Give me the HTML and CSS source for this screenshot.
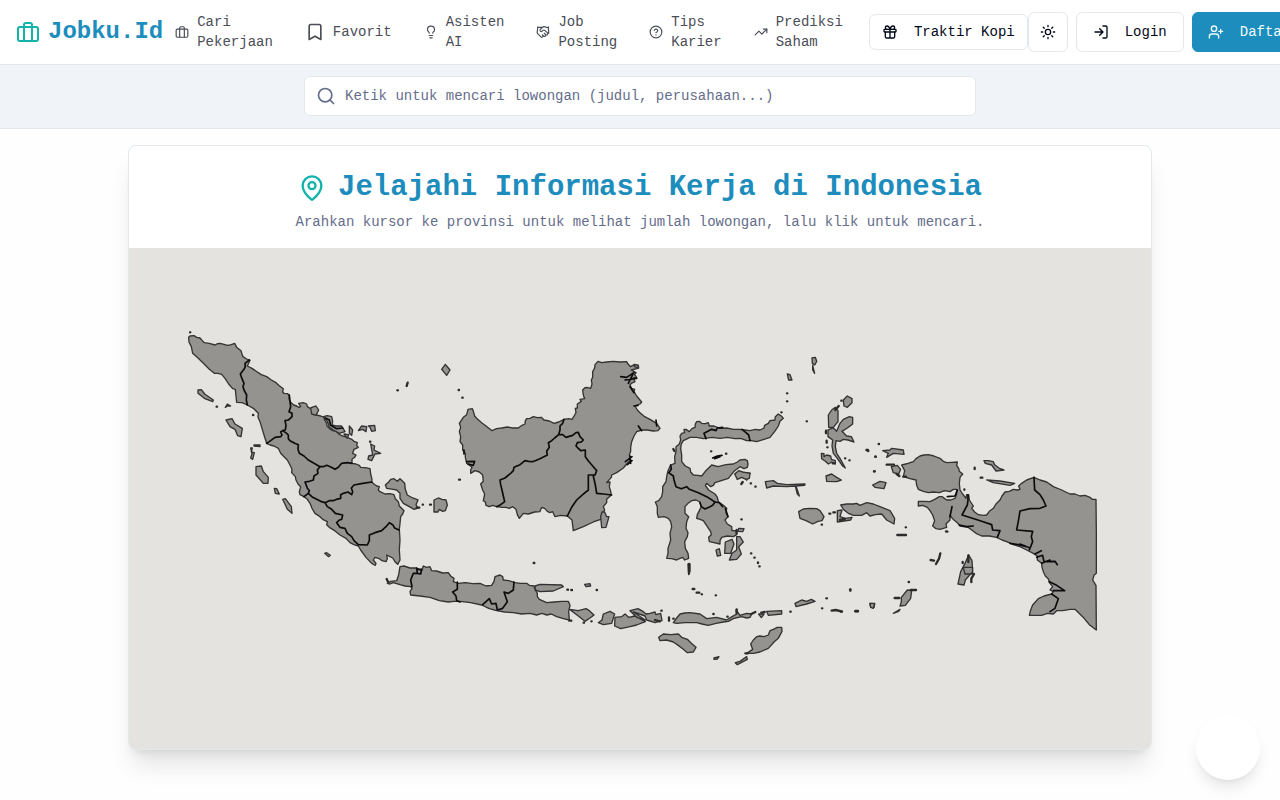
FILE: index.html
```html
<!DOCTYPE html>
<html lang="id">
<head>
<meta charset="utf-8">
<meta name="viewport" content="width=device-width, initial-scale=1">
<title>Jobku.Id</title>
<link rel="stylesheet" href="styles.css">
</head>
<body>
<header class="topbar">
  <a class="brand" href="#">
    <svg class="icon icon-brand" viewBox="0 0 24 24"><path d="M8 21V5a2 2 0 0 1 2-2h4a2 2 0 0 1 2 2v16"/><rect x="2" y="7" width="20" height="14" rx="2"/></svg>
    <span>Jobku.Id</span>
  </a>
  <nav class="nav">
    <a class="nav-link" href="#"><svg class="icon icon-sm" viewBox="0 0 24 24"><path d="M8 21V5a2 2 0 0 1 2-2h4a2 2 0 0 1 2 2v16"/><rect x="2" y="7" width="20" height="14" rx="2"/></svg><span class="nav-text">Cari Pekerjaan</span></a>
    <a class="nav-link" href="#"><svg class="icon icon-md" viewBox="0 0 24 24"><path d="m19 21-7-4-7 4V5a2 2 0 0 1 2-2h10a2 2 0 0 1 2 2z"/></svg><span class="nav-text">Favorit</span></a>
    <a class="nav-link" href="#"><svg class="icon icon-sm" viewBox="0 0 24 24"><path d="M15 14c.2-1 .7-1.700 1.500-2.500 1-.9 1.500-2.200 1.500-3.500A6 6 0 0 0 6 8c0 1 .2 2.200 1.500 3.500.7.7 1.300 1.500 1.500 2.500M9 18h6M10 22h4"/></svg><span class="nav-text">Asisten AI</span></a>
    <a class="nav-link" href="#"><svg class="icon icon-sm" viewBox="0 0 24 24"><path d="m11 17 2 2a1 1 0 1 0 3-3"/><path d="m14 14 2.500 2.500a1 1 0 1 0 3-3l-3.880-3.880a3 3 0 0 0-4.240 0l-.88.88a1 1 0 1 1-3-3l2.810-2.810a5.790 5.790 0 0 1 7.060-.87l.47.28a2 2 0 0 0 1.420.25L21 4"/><path d="m21 3 1 11h-2M3 3 2 14l6.500 6.500a1 1 0 1 0 3-3M3 4h8"/></svg><span class="nav-text">Job Posting</span></a>
    <a class="nav-link" href="#"><svg class="icon icon-sm" viewBox="0 0 24 24"><circle cx="12" cy="12" r="10"/><path d="M9.090 9a3 3 0 0 1 5.830 1c0 2-3 3-3 3M12 17h.01"/></svg><span class="nav-text">Tips Karier</span></a>
    <a class="nav-link" href="#"><svg class="icon icon-sm" viewBox="0 0 24 24"><path d="m22 7-8.500 8.500-5-5L2 17"/><path d="M16 7h6v6"/></svg><span class="nav-text">Prediksi Saham</span></a>
  </nav>
  <div class="actions">
    <button class="btn btn-compact" type="button"><svg class="icon icon-btn" viewBox="0 0 24 24"><rect x="3" y="8" width="18" height="4" rx="1"/><path d="M12 8v13M19 12v7a2 2 0 0 1-2 2H7a2 2 0 0 1-2-2v-7M7.500 8a2.500 2.500 0 0 1 0-5A4.800 8 0 0 1 12 8a4.800 8 0 0 1 4.500-5 2.500 2.500 0 0 1 0 5"/></svg>Traktir Kopi</button>
    <button class="btn btn-square" type="button" aria-label="Ganti tema"><svg class="icon icon-btn" viewBox="0 0 24 24"><circle cx="12" cy="12" r="4"/><path d="M12 2v2M12 20v2M4.930 4.930l1.410 1.410M17.660 17.660l1.410 1.410M2 12h2M20 12h2M6.340 17.660l-1.410 1.410M19.070 4.930l-1.410 1.410"/></svg></button>
    <button class="btn btn-spaced" type="button"><svg class="icon icon-btn" viewBox="0 0 24 24"><path d="M15 3h4a2 2 0 0 1 2 2v14a2 2 0 0 1-2 2h-4M10 17l5-5-5-5M15 12H3"/></svg>Login</button>
    <button class="btn btn-spaced btn-primary" type="button"><svg class="icon icon-btn" viewBox="0 0 24 24"><path d="M16 21v-2a4 4 0 0 0-4-4H6a4 4 0 0 0-4 4v2"/><circle cx="9" cy="7" r="4"/><path d="M19 8v6M22 11h-6"/></svg>Daftar</button>
  </div>
</header>

<form class="searchbar" role="search">
  <label class="search">
    <svg class="icon icon-md" viewBox="0 0 24 24"><circle cx="11" cy="11" r="8"/><path d="m21 21-4.300-4.300"/></svg>
    <input class="search-input" type="search" aria-label="Cari lowongan" placeholder="Ketik untuk mencari lowongan (judul, perusahaan...)">
  </label>
</form>

<main class="content">
  <section class="card">
    <div class="card-head">
      <h1 class="title"><svg class="icon icon-title" viewBox="0 0 24 24"><path d="M20 10c0 5-5.500 10.200-7.400 11.800a1 1 0 0 1-1.200 0C9.500 20.200 4 15 4 10a8 8 0 0 1 16 0"/><circle cx="12" cy="10" r="3"/></svg>Jelajahi Informasi Kerja di Indonesia</h1>
      <p class="subtitle">Arahkan kursor ke provinsi untuk melihat jumlah lowongan, lalu klik untuk mencari.</p>
    </div>
    <svg class="map" viewBox="129 248 1022 501" role="img" aria-label="Peta provinsi Indonesia">
      <!-- Sumatra -->
      <g transform="translate(170 320) scale(.33333)">
        <path class="land" d="M56 52L60 48 72 47 80 52 90 54 97 62 103 68 118 70 135 75 143 71 150 70 162 73 172 76 184 74 194 70 200 82 213 92 216 102 219 110 230 117 240 121 236 130 232 138 246 145 262 156 274 164 290 170 304 180 318 188 328 197 340 206 338 216 342 220 352 221 358 225 357 236 362 247 371 255 380 258 386 262 392 260 386 250 400 248 410 252 412 260 425 268 436 275 440 285 452 288 462 292 464 300 470 310 471 318 478 325 488 332 500 335 510 345 518 348 530 351 545 358 552 364 562 368 560 376 565 382 552 388 548 400 558 405 554 412 546 418 546 430 558 432 568 436 572 442 586 443 600 446 602 462 606 478 605 486 612 492 620 498 628 500 625 510 630 515 645 522 660 521 672 524 676 536 685 545 688 558 702 572 698 582 692 590 690 610 688 628 690 660 688 690 690 720 683 733 675 725 668 714 660 710 650 705 652 716 648 725 636 722 628 716 615 712 610 720 618 730 616 736 608 732 600 725 588 712 572 690 565 678 552 674 540 668 528 655 510 645 494 632 478 622 470 614 472 605 458 598 450 590 435 580 426 565 420 550 412 538 402 530 390 524 388 516 392 500 384 492 378 480 376 470 365 458 366 448 360 435 352 420 342 410 332 400 325 385 312 378 300 375 290 370 286 358 282 345 276 325 270 305 264 292 265 280 250 265 232 255 216 248 200 247 198 228 196 208 188 206 176 192 165 175 155 163 144 160 133 160 118 148 100 130 84 114 68 100 64 80 57 66Z"/>
        <path class="border" d="M238 120L225 130 226 140 222 148 211 162 216 176 222 190 219 200 222 210 230 225 229 240 232 255M358 225L360 244 362 260 357 275 366 280 366 290 360 296 355 300 345 302 348 316 346 330 338 332 332 336 336 345 332 350 315 352 302 362 290 370M338 332L350 340 355 345 355 356 360 362 374 370 385 374 384 388 388 400 402 408 415 420 432 430 450 440 460 440 470 436 484 442 495 448 505 442 515 430 532 428 546 430M450 440L442 450 444 460 432 468 430 480 418 484 405 486 408 494 412 505 418 512 415 520 402 530M415 520L428 532 440 538 452 544 465 548 478 542 490 542 500 538 512 535 512 524 520 520 534 516 545 524 548 515 544 504 552 495 578 490 606 486M465 548L472 560 485 568 496 580 518 585 515 598 508 600 500 608 510 622 525 625 532 640 545 650 552 662 565 674 592 675 598 662 598 645 615 638 635 632 648 620 658 608 668 614 674 624 687 630"/>
        <path class="land" d="M84 210L94 209 104 222 130 240 128 245 105 236 84 220ZM168 300L186 296 195 312 217 325 213 350 203 347 195 328 180 320ZM258 440L274 438 280 455 295 472 294 490 280 490 258 465ZM313 505L320 506 328 522 316 520ZM338 538L346 536 364 560 366 580 352 568ZM242 384L247 384 244 396 253 398 248 418 242 414 246 402ZM252 375L270 375 270 380 252 378ZM166 262L172 252 182 258 172 258ZM422 264L438 258 446 270 438 286 425 282ZM460 290L472 287 485 290 488 304 486 315 498 318 515 318 525 335 508 340 490 330 478 322 472 304ZM522 342L536 344 532 355ZM538 318L548 330 545 346 538 340ZM565 332L575 318 590 320 588 335 578 328ZM595 318L614 316 616 332 605 334 600 322ZM602 372L614 378 612 390 632 400 615 402 605 422 594 418 596 408 608 405ZM646 495L656 486 662 478 672 476 682 484 690 476 704 490 706 508 712 525 728 534 744 540 738 554 744 564 732 568 718 560 700 550 690 535 690 520 680 510 670 508 650 505ZM792 540L805 534 816 538 828 540 832 555 826 572 818 574 808 568 804 576 792 576Z"/>
        <path class="border" d="M466 294L478 300 482 316 500 326 518 324"/>
        <path class="land" d="M464 700L470 698 481 706 476 710Z"/>
        <path class="dot" d="M60 37h1M682 211h2M713 188l-3 10M140 260h1M249 285h1M600 365h1M758 554h1M780 554h3M740 563h8"/>
      </g>
      <!-- Kalimantan -->
      <g transform="translate(440 340) scale(.33333)">
        <path class="land" d="M84 208L97 206 100 214 104 228 113 238 125 248 138 258 156 272 170 266 185 264 202 261 218 264 235 264 246 256 255 252 256 242 260 236 270 235 280 230 292 233 304 232 312 240 328 243 342 250 356 246 372 238 386 236 396 238 404 225 408 218 406 205 412 204 412 192 424 184 420 178 434 176 430 165 428 150 434 144 440 142 452 145 456 132 454 120 458 112 458 95 464 84 465 74 474 64 485 68 500 66 520 64 540 66 560 65 564 72 572 80 584 73 595 76 596 84 590 86 574 90 588 98 584 104 590 112 580 114 585 125 574 130 570 135 575 145 584 148 582 155 590 168 605 186 600 192 585 198 592 210 600 218 614 230 630 238 650 250 660 265 654 272 640 273 622 270 605 270 590 275 582 288 575 305 572 322 572 334 568 345 572 360 560 372 550 384 530 398 515 405 514 412 500 428 510 426 508 440 512 454 514 465 500 478 500 488 490 500 494 510 488 520 482 538 460 546 430 560 400 572 398 556 396 540 382 528 362 526 345 530 338 515 330 518 322 514 315 506 306 502 302 508 300 515 284 516 265 522 250 520 238 535 232 524 228 508 218 500 208 505 198 502 186 502 170 500 158 496 148 500 138 496 136 486 130 482 134 462 128 450 122 432 130 424 128 405 118 396 105 392 92 400 92 390 96 382 80 370 76 352 76 340 68 330 68 315 60 305 62 290 58 275 62 262 58 250 66 238 70 232 80 224Z"/>
        <path class="border" d="M372 238L368 250 360 258 360 270 356 284 344 294 335 302 325 308 328 322 320 334 322 345 300 356 278 365 266 364 255 362 240 374 222 382 220 392 212 400 195 414 180 420 182 434 186 450 190 468 194 485 182 494 170 500M356 284L368 284 378 292 398 286 408 278 415 277 420 290 430 300 424 306 412 308 408 318 415 325 422 332 436 330 436 350 446 364 458 378 470 392 465 405 445 405 445 430 445 450 428 464 410 480 396 500 382 528M460 408L466 435 470 460 490 462 515 465M542 110L560 112 582 98M555 120L590 115M565 130L580 100M570 140L582 158M582 198L594 196M595 258L605 272M648 240L650 258M556 365L576 350M562 374L576 362M570 348L572 370M80 365L104 364 100 376 84 372M72 330L72 342"/>
        <path class="land" d="M486 516L494 516 500 530 507 530 498 562 485 563 482 530ZM5 88L16 73 30 90 20 106ZM582 74L595 76 594 84 584 80Z"/>
        <path class="dot" d="M56 150h1M67 173h1M57 419h3"/>
      </g>
      <!-- Sulawesi and Maluku -->
      <g transform="translate(640 340) scale(.33333)">
        <path class="land" d="M165 262L166 252 170 245 178 244 185 250 196 251 205 248 208 258 222 258 240 265 260 264 280 268 300 268 314 270 330 272 346 268 360 270 372 264 374 256 385 250 390 242 405 240 406 230 415 222 424 228 430 235 420 244 415 258 406 272 390 292 372 298 350 305 334 302 320 302 302 295 285 296 262 292 240 295 216 292 190 296 170 292 150 292 138 298 130 302 124 312 122 325 125 345 125 365 136 378 150 385 152 396 160 405 174 406 185 408 196 394 206 384 215 375 234 380 258 374 280 372 292 366 300 360 314 358 322 362 324 372 322 382 312 386 300 380 284 392 265 415 244 422 225 428 220 436 212 440 200 430 196 436 206 450 225 462 232 472 235 485 250 496 260 505 258 518 264 530 255 540 262 552 275 560 276 572 288 572 290 584 280 590 262 588 245 592 240 602 240 612 222 608 208 605 206 592 214 584 212 575 202 560 190 542 180 538 170 535 172 524 178 512 184 500 180 486 168 480 155 482 144 490 135 500 135 520 146 530 140 545 138 565 144 578 142 590 134 605 136 625 144 640 146 655 134 660 128 652 118 656 110 660 95 656 80 655 84 640 84 625 92 600 90 580 95 560 92 545 85 535 72 530 55 532 52 520 52 500 46 486 56 482 65 470 68 455 68 440 78 425 80 410 84 392 92 375 105 370 104 350 108 335 108 320 118 312 122 300 120 288 125 280 134 278 132 268 138 268 148 275 156 266Z"/>
        <path class="border" d="M92 375L94 388 86 398 100 408 102 420 108 440 124 446 140 440 148 448 175 458 200 470 225 486 238 488 248 500M225 486L218 496 210 500 195 507 184 500 180 488M248 262L232 264 228 272 215 268 192 280 198 296M306 268L318 278 326 285 330 302M218 354L232 348 246 346M224 356L240 350M300 398L330 400M304 410L326 410M318 400L320 420M256 505L264 530"/>
        <path class="land" d="M284 402L296 392 308 396 330 400 328 415 318 418 305 412 292 418ZM376 425L400 422 412 430 440 434 495 432 494 436 468 438 478 468 472 462 466 438 440 440 400 438 380 444ZM476 515L490 507 510 505 530 506 540 512 552 530 546 542 534 544 518 552 498 542 480 535ZM602 495L620 492 640 492 650 490 660 496 680 488 700 492 720 500 750 512 764 535 762 552 740 540 725 522 706 524 690 528 680 518 665 526 640 526 625 520 612 510ZM592 512L606 510 600 530 616 535 636 532 632 540 592 546ZM565 225L575 210 586 202 594 212 594 245 580 262 566 262ZM610 180L622 168 636 176 636 188 622 202 612 198ZM600 250L610 238 628 230 638 232 638 252 622 264 606 274 620 288 634 290 642 306 624 300 610 298 600 304 588 302 586 320 590 340 600 355 616 384 608 378 592 355 580 340 576 318 578 300 564 290 564 270 580 264 590 274ZM544 340L552 341 552 350 560 345 572 348 574 358 586 362 586 372 575 366 565 372 556 364 545 356ZM558 408L575 402 590 412 604 420 590 425 560 424ZM516 54L526 52 530 64 524 75 517 70ZM518 76L518 90 524 100ZM442 102L450 104 456 120 446 120ZM256 606L276 598 282 612 272 640 254 640ZM296 565L312 566 308 575 294 574ZM290 590L300 590 310 606 296 620 304 642 290 658 268 660 276 640 290 630ZM228 630L238 626 242 646 232 648ZM144 672L150 672 150 692 146 704Z"/>
        <path class="dot" d="M213 334h1M258 341h1M304 432l4-6M346 440h1M332 430h1M441 160h1M441 184h1M500 244h1M558 272v8M560 302v6M562 322h1M596 198l-10 12M615 355h1M628 361h1M680 330l5 3M706 350h1M702 394h2M568 521h3M580 517h5M545 554h1M304 538h1M333 640h1M343 653h1M354 667v2M358 679h1M100 327l3 6M424 217h1M290 570v10M604 182h1M578 370h6"/>
      </g>
      <!-- Papua -->
      <g transform="translate(840 400) scale(.33333)">
        <path class="land" d="M185 195L204 190 220 185 228 176 240 168 252 165 265 164 282 168 300 175 310 184 320 188 336 187 352 186 350 196 356 205 358 214 368 222 360 232 358 250 360 270 368 282 378 295 380 284 386 284 388 300 400 318 395 325 404 336 415 344 430 346 440 345 448 334 460 325 468 312 480 300 486 288 495 276 508 274 520 268 532 270 540 268 536 258 545 250 560 240 582 232 600 240 620 246 640 260 665 270 690 282 705 282 720 288 735 286 750 292 756 298 768 298 769 400 769 520 762 526 758 540 768 556 769 690 748 674 728 650 705 628 690 628 668 632 650 632 640 642 622 640 605 646 568 646 572 630 578 615 595 596 612 588 635 582 640 575 630 570 638 560 628 548 626 538 616 528 610 515 606 502 605 490 592 480 592 468 580 460 560 450 540 440 520 434 500 425 486 420 470 412 448 408 425 408 408 400 395 390 384 382 360 378 352 368 342 360 336 354 330 345 330 360 318 372 320 382 300 388 288 386 278 378 284 362 278 345 270 332 262 322 248 316 235 318 235 304 250 304 270 305 284 298 298 290 306 290 320 300 332 300 345 295 350 282 350 268 340 268 330 275 314 272 298 278 280 276 265 278 250 274 235 268 230 256 228 240 210 236 190 230 194 212Z"/>
        <path class="border" d="M384 285L384 300 382 315 374 330 366 345 395 354 425 364 455 374 458 390 480 392 472 412M582 232L584 270 600 284 610 300 618 318 600 325 570 326 540 333 536 358 530 390 578 394 574 410 578 425 568 450M635 582L655 596 645 625 630 635M628 545L650 556 674 572 640 572M585 462L604 452M590 472L608 466 612 485 645 484 652 494M605 490L630 480M510 430L535 434 560 440M330 350L336 320M322 290L345 288 352 270M358 375L380 380 400 378M540 432L570 444"/>
        <path class="land" d="M128 152L150 150 155 145 190 150 192 163 160 160 140 172 145 160ZM154 200L172 196 182 208 176 222 160 218ZM98 255L120 244 138 248 132 266 105 262ZM432 182L445 182 460 185 464 194 478 205 492 210 468 213 455 195 436 190ZM440 240L480 243 524 250 510 256 460 248ZM362 515L375 490 386 465 396 482 398 515 376 540 372 555 354 552ZM370 502L398 502 398 522 375 522ZM184 592L202 570 215 572 212 595 196 616 180 618 184 606ZM90 610L104 612 102 622 92 622ZM160 640L180 628 176 634Z"/>
        <path class="dot" d="M116 132h1M80 150h4M106 170h1M102 214h2M140 194h22M170 222l8 6M190 230h8M404 203v4M422 233h5M373 268v1M197 382h1M172 405h26M318 394l4 1M301 460l-4 16-9 16M272 480l10 2M368 486v3M402 522l-8 14v10M206 546h1M212 570h16M164 594h14M30 569h1M2 635h4M46 634h8M0 360l14-3M385 466v20"/>
      </g>
      <!-- Java and Bali -->
      <g transform="translate(380 540) scale(.33333)">
        <path class="land" d="M60 80L72 78 90 84 110 84 125 92 130 78 140 82 150 80 155 92 170 93 188 99 205 98 212 108 222 115 220 125 235 130 256 128 278 131 300 130 318 138 335 136 342 124 345 110 360 105 368 110 370 120 386 122 405 128 422 130 440 130 448 136 462 138 466 150 472 160 472 170 478 178 500 188 522 186 545 184 565 184 570 196 566 215 568 240 550 236 530 230 514 222 500 225 486 220 470 225 450 220 425 222 400 218 374 216 350 212 328 206 305 195 272 188 240 184 222 184 205 186 178 182 150 172 120 168 92 165 90 154 96 146 92 140 75 138 60 134 40 128 30 132 22 130 32 124 50 122 56 104Z"/>
        <path class="border" d="M110 84L112 100 100 100 92 120 96 140M125 88L122 102 112 100M110 88L124 88M232 126L232 148 218 156 228 168 230 182 240 186M402 126L400 150 385 160 372 156 382 185 368 205 352 210 348 190 335 192 328 176 308 194"/>
        <path class="land" d="M465 138L480 133 545 135 550 140 520 153 480 155 466 150ZM568 208L595 212 618 206 628 212 642 225 630 234 615 244 595 228ZM670 222L690 214 704 222 695 250 670 254 655 248 666 240ZM614 133L630 131 632 138 618 140Z"/>
        <path class="dot" d="M461 69h2M562 149h2M574 150h2M650 150h1M20 117l4 8M568 242h6M611 248h1M634 244h1"/>
      </g>
      <!-- Nusa Tenggara -->
      <g transform="translate(600 540) scale(.33333)">
        <path class="land" d="M45 232L65 230 75 222 86 232 105 228 136 245 110 255 90 260 62 266 44 258ZM90 212L114 206 130 215 138 222 150 220 165 216 168 224 182 220 186 242 165 248 140 240 135 228 118 222 100 216 136 240 110 232ZM220 248L230 234 240 222 255 219 270 218 300 222 320 236 350 232 380 240 396 230 410 222 408 210 420 226 440 220 455 222 450 232 440 234 425 230 400 236 385 244 370 246 348 250 325 256 306 252 290 248 255 248 230 250ZM476 222L492 222 484 233ZM500 214L545 212 545 222 505 226ZM585 190L605 180 620 184 634 178 645 184 620 192 588 200ZM176 292L190 282 212 284 235 282 245 292 262 298 274 310 288 322 280 336 262 338 250 328 240 320 220 306 200 300 180 302ZM460 300L470 290 480 288 492 290 505 285 510 272 520 268 532 262 545 262 546 274 535 295 522 306 505 325 480 336 460 340 440 340 458 328 452 312ZM406 368L420 364 440 350 442 358 412 374ZM342 354L357 350 352 357 342 358ZM810 190L824 190 820 205 812 202Z"/>
        <path class="dot" d="M267 72v28M278 147h5M290 158h8M305 163h1M347 166h1M207 232v10M220 236h1M340 222h1M436 340h8M454 222l12-6M484 218l10-2M571 215h1M666 205h1M679 175h2M695 212l12-2 18 4M766 213h8M751 148v4M410 208v12M165 240l14 4M184 212h1M382 230h1"/>
      </g>
    </svg>
  </section>
</main>
<button class="fab" type="button" aria-label="Bantuan"></button>
</body>
</html>
```
FILE: styles.css
```css
* { box-sizing: border-box; }

body {
  margin: 0;
  min-height: 100vh;
  background: #fefefe;
  color: #020817;
  font: 14px/20px "Liberation Mono", monospace;
}

.icon {
  flex: none;
  fill: none;
  stroke: currentColor;
  stroke-width: 2;
  stroke-linecap: round;
  stroke-linejoin: round;
}
.icon-sm { width: 14px; height: 14px; }
.icon-btn { width: 16px; height: 16px; }
.icon-md { width: 20px; height: 20px; }
.icon-brand { width: 24px; height: 24px; color: #12b3a9; }
.icon-title { width: 28px; height: 28px; color: #12b3a9; }

.topbar {
  position: relative;
  display: flex;
  align-items: center;
  height: 65px;
  padding-left: 16px;
  overflow: hidden;
  background: #fff;
  border-bottom: 1px solid #e3e8ec;
}
.brand {
  display: flex;
  align-items: center;
  gap: 8px;
  margin-right: 12px;
  color: #1c8dbc;
  font-size: 24px;
  line-height: 32px;
  font-weight: 700;
  text-decoration: none;
}
.nav { display: flex; gap: 32px; }
.nav-link {
  display: flex;
  align-items: center;
  gap: 8px;
  color: #4b4e57;
  text-decoration: none;
}
.nav-text { width: min-content; }
.actions {
  display: flex;
  flex: none;
  align-items: center;
  margin-left: 26px;
}
.btn {
  display: inline-flex;
  flex: none;
  align-items: center;
  justify-content: center;
  gap: 16px;
  height: 40px;
  padding: 0 16px;
  border: 1px solid #e2e8ec;
  border-radius: 6px;
  background: #fff;
  color: #020817;
  font: inherit;
}
.btn-compact { height: 36px; padding: 0 12px; }
.btn-square { width: 40px; padding: 0; }
.btn-spaced { margin-left: 8px; }
.btn-primary {
  padding: 0 15px;
  border-color: #1c8dbc;
  background: #1c8dbc;
  color: #f1fafd;
}

.searchbar {
  display: flex;
  justify-content: center;
  padding: 11px 16px 12px;
  background: #f0f4f9;
  border-bottom: 1px solid #e2e8ec;
}
.search {
  display: flex;
  align-items: center;
  gap: 9px;
  width: 100%;
  max-width: 672px;
  height: 40px;
  padding: 0 11px;
  border: 1px solid #e2e8ec;
  border-radius: 6px;
  background: #fff;
  color: #656d8a;
}
.search-input {
  flex: 1;
  min-width: 0;
  padding: 0;
  border: 0;
  outline: 0;
  background: none;
  color: #020817;
  font: inherit;
}
.search-input::placeholder { color: #656d8a; opacity: 1; }

.content { padding: 16px 16px 48px; }
.card {
  max-width: 1024px;
  margin: 0 auto;
  overflow: hidden;
  border: 1px solid #e2e8ec;
  border-radius: 8px;
  background: #fff;
  box-shadow: 0 20px 25px -5px rgb(0 0 0 / 10%), 0 8px 10px -6px rgb(0 0 0 / 10%);
}
.card-head {
  padding: 24px 24px 16px;
  text-align: center;
}
.title {
  display: flex;
  align-items: center;
  justify-content: center;
  gap: 12px;
  margin: 0 0 6px;
  color: #1c8dbc;
  font-size: 29px;
  line-height: 36px;
  font-weight: 700;
}
.subtitle { margin: 0; color: #656d8a; }

.map {
  display: block;
  width: 100%;
  height: auto;
  background: #e4e3df;
}
.land, .border, .dot { stroke-linejoin: round; stroke-linecap: round; }
.land { fill: #949390; stroke: #333; stroke-width: 4; }
.border { fill: none; stroke: #0c0c0c; stroke-width: 5; }
.dot { fill: none; stroke: #2b2b2b; stroke-width: 7; }

.fab {
  position: fixed;
  right: 20px;
  bottom: 20px;
  width: 64px;
  height: 64px;
  border: 0;
  border-radius: 50%;
  background: #fff;
  box-shadow: 0 10px 15px -3px rgb(0 0 0 / 10%), 0 4px 6px -4px rgb(0 0 0 / 10%);
}
```
